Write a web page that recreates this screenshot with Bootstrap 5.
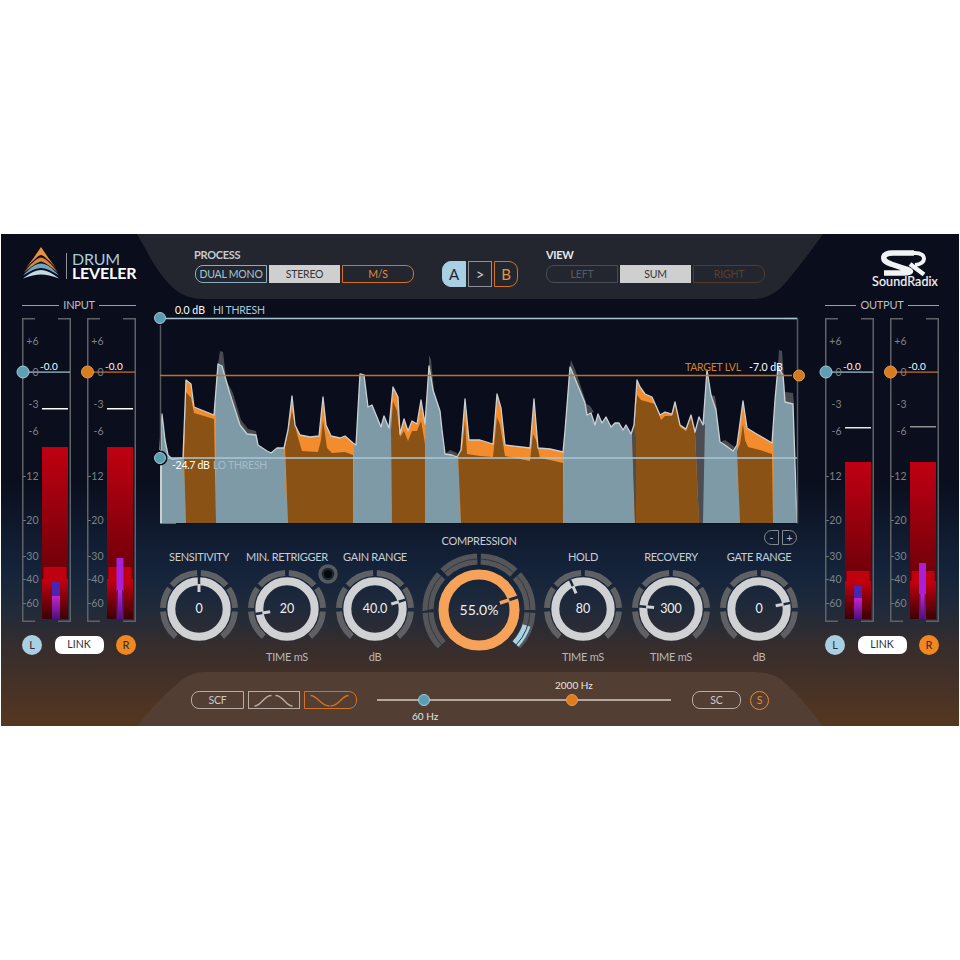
<!DOCTYPE html>
<html lang="en">
<head>
<meta charset="utf-8">
<title>Drum Leveler</title>
<link href="https://cdn.jsdelivr.net/npm/bootstrap@5.3.0/dist/css/bootstrap.min.css" rel="stylesheet">
<style>
html,body{background:#fff;}
body{font-family:"Lato","Liberation Sans",sans-serif;}
.plugin{width:958px;height:492px;margin:234px 0 0 1px;position:relative;overflow:hidden;color:#c9ccd0;
 background:linear-gradient(180deg,#0a0d1c 0%,#0a0e1d 50%,#14233a 68%,#1f2a3a 76%,#372d2d 84%,#483226 93%,#553720 100%);}
.plate{position:absolute;inset:0;width:958px;height:492px;}
.topbar{height:65px;position:relative;}
.brand{width:114px;margin-left:22px;height:65px;position:relative;}
.brand-mark{position:absolute;left:-1px;top:11px;}
.brand-name{position:absolute;left:49px;top:18px;font-weight:700;font-size:16px;line-height:14px;letter-spacing:-.2px;color:#fff;}
.brand-name span{display:block;}
.brand-name .nm1{color:#a6cbdd;font-weight:400;}
.brand-rule{position:absolute;left:43px;top:19px;height:26px;width:1px;background:#8d9198;}
.grp-title{font-size:11px;font-weight:700;letter-spacing:-.3px;line-height:12px;padding-top:15px;box-sizing:content-box;height:12px;margin-bottom:4px;margin-left:-1px;color:#c8cbd0;}
.title-view{color:#e6e8ea;margin-left:0;}
.proc{margin-left:58px;}
.view{margin-left:28px;}
.abgrp{margin-left:28px;margin-top:27px;gap:2px;}
.pbtn{--bs-btn-padding-x:0;--bs-btn-padding-y:0;--bs-btn-font-size:10.5px;--bs-btn-line-height:15px;--bs-btn-border-radius:0;
 height:18px;font-family:inherit;border-width:1.5px;letter-spacing:-.2px;display:flex;align-items:center;justify-content:center;}
.w72{width:72px;}.w69{width:71px;}
.gap-2px{gap:2px;}
.r-l{border-radius:8px 0 0 8px;}
.r-r{border-radius:0 8px 8px 0;}
.r-a{border-radius:8px;}
.b-blue{border-color:#8aafc2;color:#a8c6d5;}
.b-fill{background:#cfcfcf;border-color:#cfcfcf;color:#33363c;}
.b-org{border-color:#d5711f;color:#e28a3c;}
.b-dim1{border-color:#474d57;color:#565c66;}
.b-dim2{border-color:#54392d;color:#593f31;}
.b-lite{border-color:#b7aca6;color:#cfc8c3;}
.b-curve{width:52px;height:18px;border:1.5px solid #b7aca6;}
.b-dip{width:53px;height:18px;border:1.5px solid #d5711f;}
.w53{width:53px;}
.abtn{--bs-btn-padding-x:0;--bs-btn-padding-y:0;--bs-btn-font-size:15px;--bs-btn-border-radius:0;width:24px;height:26px;font-family:inherit;border-width:1.5px;display:flex;align-items:center;justify-content:center;}
.a-on{background:#a8d0e2;border-color:#a8d0e2;color:#1f2530;border-radius:9px 0 0 9px;}
.a-mid{border-color:#8d9096;color:#c9ccd0;}
.a-b{border-color:#d5711f;color:#e8933e;border-radius:0 9px 9px 0;}
.srlogo{position:absolute;left:868px;top:11px;width:72px;height:47px;}
.srlogo svg{overflow:visible;}
.srname{position:absolute;left:0;right:0;top:30px;text-align:center;font-size:12.5px;font-weight:400;line-height:14px;color:#f2f3f4;letter-spacing:.1px;-webkit-text-stroke:.2px #f2f3f4;}
.mainrow{height:372px;position:relative;}
.mcol{width:149px;padding-left:21px;}
.mcol-r{padding-left:15px;width:149px;}
.mtitle{width:114px;height:12px;font-size:11px;letter-spacing:-.25px;line-height:12px;color:#bcbfc3;gap:4px;margin-bottom:7px;}
.mtitle i{flex:1;height:1px;background:#9a9da2;}
.vupair{gap:16px;}
.vu{width:49px;height:304px;position:relative;}
.vu svg{position:absolute;left:0;top:0;overflow:visible;}
.sc{position:absolute;left:0;width:16.5px;text-align:right;font-size:10.5px;line-height:12px;color:#7f8287;}
.val{position:absolute;left:18px;top:42px;font-size:10px;line-height:12px;color:#fff;}
.lrrow{width:114px;margin-top:13px;height:19px;}
.dot{width:20px;height:20px;border-radius:50%;font-size:11px;line-height:1;display:flex;align-items:center;justify-content:center;color:#2b2f36;}
.dot-l{background:#a8d0e2;}
.dot-r{background:#f2861f;}
.linkbtn{width:49px;height:18px;border-radius:7px;background:#fff;color:#2e3138;font-size:10.5px;display:flex;align-items:center;justify-content:center;}
.ccol{width:660px;position:relative;}
.wavebox{width:660px;height:226px;margin-top:9px;position:relative;}
.wavebox svg{position:absolute;left:0;top:0;}
.wl{position:absolute;font-size:10.5px;line-height:12px;white-space:nowrap;}
.wcap{font-size:10.5px;letter-spacing:-.25px;}
.t1{left:25px;top:-4px;color:#fff;}
.t2{left:63px;top:-4px;color:#a8c8d8;}
.t3{left:22px;top:151px;color:#fff;letter-spacing:-.3px;}
.t4{left:63px;top:151px;color:#a5bcc8;}
.t5{left:535px;top:53px;color:#d3812f;}
.t6{left:599px;top:53px;color:#fff;}
.zoomrow{position:absolute;left:614px;top:222px;gap:3px;}
.zbtn{width:15px;height:15px;border:1px solid #85888d;color:#b9bcc0;font-size:11px;line-height:1;display:flex;align-items:center;justify-content:center;}
.knobs{padding-left:5px;height:132px;}
.knob{width:88px;padding-top:16px;position:relative;}
.knob-big{width:120px;padding-top:0;}
.klabel{font-size:11px;letter-spacing:-.3px;line-height:14px;height:14px;white-space:nowrap;color:#c9ccd0;text-align:center;}
.ksub{font-size:11px;letter-spacing:-.25px;line-height:14px;height:14px;color:#b6b8bb;text-align:center;margin-top:1px;}
.kwrap{position:relative;width:80px;height:80px;margin:5px auto 0;}
.kwrap-big{width:120px;height:116px;margin-top:4px;}
.kval{font-size:12.5px;color:#f0f1f2;line-height:1;}
.kval-big{font-size:14px;}
.retr{position:absolute;left:75px;top:30px;}
.botrow{height:55px;padding:20px 0 0 190px;position:relative;gap:4px;}
.slider{width:294px;height:18px;margin:0 17px 0 16px;position:relative;}
.track{position:absolute;left:0;right:0;top:8px;height:2px;background:#b3a79e;}
.knobdot{position:absolute;top:3px;width:12px;height:12px;border-radius:50%;margin-left:-6px;}
.kd1{left:47px;background:#5a9fb3;border:1px solid #a9cad6;}
.kd2{left:195px;background:#dd7d1e;border:1px solid #f09b45;}
.hz{position:absolute;font-size:10px;line-height:12px;color:#e8e3de;white-space:nowrap;}
.hz1{left:178px;top:-12px;}
.hz2{left:35px;top:19px;}
.sbtn{width:49px;}
.scirc{width:19px;height:19px;border-radius:50%;border:1.5px solid #ec8a2c;color:#ec8a2c;font-size:10.5px;line-height:1;margin-left:5px;display:flex;align-items:center;justify-content:center;}
</style>
</head>
<body>
<svg width="0" height="0" class="position-absolute">
<defs>
<linearGradient id="g1" x1="0" y1="0" x2="0" y2="1"><stop offset="0" stop-color="#c00012"/><stop offset="1" stop-color="#6a0009"/></linearGradient>
<linearGradient id="g2" x1="0" y1="0" x2="0" y2="1"><stop offset="0" stop-color="#c60010"/><stop offset="1" stop-color="#3a0005"/></linearGradient>
<linearGradient id="gm" x1="0" y1="0" x2="0" y2="1"><stop offset="0" stop-color="#c424cc"/><stop offset="1" stop-color="#4d0f80"/></linearGradient>
<symbol id="ring" viewBox="-40 -40 80 80">
<circle r="36" fill="none" stroke="#5e6064" stroke-width="6" pathLength="360" stroke-dasharray="0 3 46 6 33 6 46 80 46 6 33 6 46 3" transform="rotate(-90)"/>
<circle r="27.7" fill="none" stroke="#d0d1d3" stroke-width="8"/>
</symbol>
<clipPath id="envclip"><polygon points="160,523 160,450 162,414 165,440 168,455 172,459 183,458 186,380 191,384 194,407 214,415 218,364 222,366 230,394 240,425 247,434 256,435 258,445 267,451 271,453 277,448 284,448 288,430 292,396 295,425 300,435 310,437 319,436 323,397 326,425 331,436 340,438 345,436 353,443 356,445 360,374 364,375 368,407 372,405 381,427 384,416 389,428 393,387 398,397 400,434 404,419 408,431 412,421 417,424 421,400 425,424 429,366 433,390 440,411 442,430 445,454 452,455 457,457 461,450 465,399 469,440 480,440 493,444 497,394 501,408 505,445 530,448 534,399 538,448 550,449 563,452 565,431 570,367 574,376 585,403 587,415 591,413 595,425 598,414 602,423 606,417 611,427 615,423 619,423 623,430 626,425 631,434 634,425 637,380 640,387 645,394 652,397 660,415 665,412 672,414 675,402 680,425 686,429 691,415 695,432 699,417 703,425 707,370 711,395 716,410 720,442 725,445 733,451 737,445 743,401 747,428 755,433 772,443 775,400 778,367 783,375 785,402 793,404 797,523"/></clipPath>
</defs>
</svg>

<div class="plugin d-flex flex-column">
  <svg class="plate" viewBox="1 234 958 492" aria-hidden="true">
    <path d="M137 234C147 251 155 270 172 287C182 296 192 299 205 299H752C768 299 778 292 787 281C800 265 812 250 823 234Z" fill="#23262f"/>
    <path d="M137 726C150 710 165 694 177 684C186 676 194 672 205 672H752C766 672 775 675 783 681C796 692 810 709 823 726Z" fill="#533e34"/>
  </svg>

  <div class="topbar d-flex">
    <div class="brand">
      <svg class="brand-mark" width="38" height="34" viewBox="22 245 38 34" aria-hidden="true">
        <path d="M41 247C37 253 31 262 26 268C32 262 37 256 41 255C45 256 50 262 56 268C51 262 45 253 41 247Z" fill="#e8933c"/>
        <path d="M41 257.500C36 258 30 265 24 272.500C31 267 37 262 41 261.500C45 262 51 267 58 272.500C52 265 46 258 41 257.500Z" fill="#d98436"/>
        <path d="M41 263.500C35 263.500 29 269 23 275.500C30 271 36 268 41 268C46 268 52 271 59 275.500C53 269 47 263.500 41 263.500Z" fill="#6fa6c2"/>
        <path d="M41 270C35 270 29 274 23 278.500C30 276 36 274.500 41 274.500C46 274.500 52 276 59 278.500C53 274 47 270 41 270Z" fill="#c3dae5"/>
      </svg>
      <i class="brand-rule"></i>
      <div class="brand-name"><span class="nm1">DRUM</span><span>LEVELER</span></div>
    </div>
    <div class="proc">
      <div class="grp-title">PROCESS</div>
      <div class="d-flex gap-2px">
        <button class="btn pbtn w72 r-l b-blue">DUAL MONO</button>
        <button class="btn pbtn w69 b-fill">STEREO</button>
        <button class="btn pbtn w72 r-r b-org">M/S</button>
      </div>
    </div>
    <div class="abgrp d-flex">
      <button class="btn abtn a-on">A</button>
      <button class="btn abtn a-mid">&gt;</button>
      <button class="btn abtn a-b">B</button>
    </div>
    <div class="view">
      <div class="grp-title title-view">VIEW</div>
      <div class="d-flex gap-2px">
        <button class="btn pbtn w72 r-l b-dim1">LEFT</button>
        <button class="btn pbtn w69 b-fill">SUM</button>
        <button class="btn pbtn w72 r-r b-dim2">RIGHT</button>
      </div>
    </div>
    <div class="srlogo">
      <svg width="72" height="30" viewBox="868 246 72 30" class="position-absolute top-0 start-0" aria-hidden="true">
        <path d="M913 254H892C880 254 880 262 890 265L905 270C912 272 910 274 903 274H883" fill="none" stroke="#f2f3f4" stroke-width="5.500"/>
        <path d="M905 254H914C926 254 926 265 914 266" fill="none" stroke="#f2f3f4" stroke-width="4"/>
        <path d="M909 265L923 275.500" fill="none" stroke="#f2f3f4" stroke-width="4.500"/>
      </svg>
      <div class="srname">SoundRadix</div>
    </div>
  </div>

  <div class="mainrow d-flex">
    <div class="mcol">
      <div class="mtitle d-flex align-items-center"><i></i>INPUT<i></i></div>
      <div class="vupair d-flex">
        <div class="vu">
          <svg width="49" height="304" viewBox="0 0 49 304" aria-hidden="true">
            <path d="M13 .75H.75V303.250H13M36 .75H48.250V303.250H36" fill="none" stroke="#5f6267" stroke-width="1.500"/>
            <rect x="20" y="129" width="26" height="133" fill="url(#g1)"/>
            <rect x="20" y="261" width="26" height="40" fill="url(#g2)"/>
            <rect x="21.500" y="249" width="23" height="14" fill="#bf000f"/>
            <rect x="30" y="264" width="8" height="15" fill="#4a25b0"/>
            <rect x="30" y="278" width="8" height="23" fill="url(#gm)"/>
            <rect x="20" y="90" width="26" height="1.500" fill="#fff"/>
            <rect x="1" y="53.500" width="47" height="1.200" fill="#a9cad8"/>
            <circle cx="1" cy="54" r="6" fill="#5f9fb3" stroke="#a9cad8" stroke-width="1"/>
          </svg>
          <span class="sc" style="top:17px">+6</span><span class="sc" style="top:48px">0</span><span class="sc" style="top:80px">-3</span><span class="sc" style="top:107px">-6</span><span class="sc" style="top:152px">-12</span><span class="sc" style="top:196px">-20</span><span class="sc" style="top:232px">-30</span><span class="sc" style="top:255px">-40</span><span class="sc" style="top:279px">-60</span>
          <span class="val">-0.0</span>
        </div>
        <div class="vu">
          <svg width="49" height="304" viewBox="0 0 49 304" aria-hidden="true">
            <path d="M13 .75H.75V303.250H13M36 .75H48.250V303.250H36" fill="none" stroke="#5f6267" stroke-width="1.500"/>
            <rect x="20" y="129" width="26" height="133" fill="url(#g1)"/>
            <rect x="20" y="261" width="26" height="40" fill="url(#g2)"/>
            <rect x="21.500" y="249" width="23" height="14" fill="#bf000f"/>
            <rect x="29.500" y="240" width="7" height="34" fill="#a520d8"/>
            <rect x="29.500" y="272" width="7" height="29" fill="#5d1485"/>
            <rect x="31" y="272" width="4" height="29" fill="url(#gm)"/>
            <rect x="20" y="90" width="26" height="1.500" fill="#fff"/>
            <rect x="1" y="53.500" width="47" height="1.200" fill="#cf7521"/>
            <circle cx=".5" cy="54" r="6" fill="#d97c1f" stroke="#e59a50" stroke-width="1"/>
          </svg>
          <span class="sc" style="top:17px">+6</span><span class="sc" style="top:48px">0</span><span class="sc" style="top:80px">-3</span><span class="sc" style="top:107px">-6</span><span class="sc" style="top:152px">-12</span><span class="sc" style="top:196px">-20</span><span class="sc" style="top:232px">-30</span><span class="sc" style="top:255px">-40</span><span class="sc" style="top:279px">-60</span>
          <span class="val">-0.0</span>
        </div>
      </div>
      <div class="lrrow d-flex justify-content-between align-items-center">
        <div class="dot dot-l">L</div><div class="linkbtn">LINK</div><div class="dot dot-r">R</div>
      </div>
    </div>

    <div class="ccol">
      <div class="wavebox">
        <svg width="660" height="226" viewBox="150 308 660 226" aria-hidden="true">
          <rect x="160" y="318" width="638" height="205.500" fill="#0a0d1c"/>
          <g fill="#4a4b51">
            <polygon points="218,364 220,351 223,352 226,378 222,366"/>
            <polygon points="225,378 233,393 241,420 248,429 256,431 258,445 256,435 247,434 240,425 230,394"/>
            <polygon points="429,366 429,355 431,360 434,390 433,390"/>
            <polygon points="445,454 450,450 457,453 457,457 452,455"/>
            <polygon points="570,367 571,360 576,372 586,402 585,403 574,376"/>
            <polygon points="585,403 590,406 594,412 591,413 587,415"/>
            <polygon points="711,395 715,396 717,410 716,410"/>
            <polygon points="776,400 779,350 782,351 785,392 793,393 794,404 785,402 783,375 778,367"/>
            <polygon points="720,442 725,440 735,447 733,451 725,445"/>
          </g>
          <g clip-path="url(#envclip)">
            <rect x="160" y="320" width="640" height="204" fill="#f28c2c"/>
            <g fill="#7f9aa7">
              <polygon points="160,320 184,320 184,458 186,523 160,523"/>
              <polygon points="216,320 284,320 284,447 288,523 216,523"/>
              <polygon points="356,320 390,320 391,430 392,523 353,523"/>
              <polygon points="426,320 458,320 458,454 461,523 425,523"/>
              <polygon points="566,320 632,320 632,434 635,523 563,523"/>
              <polygon points="705,320 737,320 737,451 740,523 703,523"/>
              <polygon points="775,320 798,320 798,523 773,523"/>
            </g>
            <g fill="#8b5215">
              <polygon points="186,523 184,458 186,392 191,398 194,413 214,419 216,523"/>
              <polygon points="288,523 285,447 292,411 297,434 302,451 318,452 321,440 323,420 327,448 332,453 345,452 353,455 353,523"/>
              <polygon points="392,523 391,430 393,401 397,411 400,437 404,431 408,441 412,431 417,431 421,421 425,444 425,523"/>
              <polygon points="461,523 458,454 462,450 465,420 467,454 480,456 493,457 497,417 500,425 505,456 530,461 533,434 536,440 540,458 550,460 563,463 563,523"/>
              <polygon points="635,523 632,434 634,428 637,395 641,400 648,402 655,404 661,420 665,416 672,416 675,404 680,427 686,431 691,417 695,434 699,523"/>
              <polygon points="740,523 737,451 740,444 743,424 745,440 748,447 760,450 772,454 773,523"/>
            </g>
            <polygon points="695,432 699,417 703,425 705,424 703,523 699,523" fill="#4c4d52"/>
            <polygon points="632,434 634,425 636,440 636,523 635,523" fill="#4c4d52"/>
            <rect x="160" y="414" width="2" height="110" fill="#c9ced2"/>
          </g>
          <polyline points="160,450 162,414 165,440 168,455 172,459 183,458 186,380 191,384 194,407 214,415 218,364 222,366 230,394 240,425 247,434 256,435 258,445 267,451 271,453 277,448 284,448 288,430 292,396 295,425 300,435 310,437 319,436 323,397 326,425 331,436 340,438 345,436 353,443 356,445 360,374 364,375 368,407 372,405 381,427 384,416 389,428 393,387 398,397 400,434 404,419 408,431 412,421 417,424 421,400 425,424 429,366 433,390 440,411 442,430 445,454 452,455 457,457 461,450 465,399 469,440 480,440 493,444 497,394 501,408 505,445 530,448 534,399 538,448 550,449 563,452 565,431 570,367 574,376 585,403 587,415 591,413 595,425 598,414 602,423 606,417 611,427 615,423 619,423 623,430 626,425 631,434 634,425 637,380 640,387 645,394 652,397 660,415 665,412 672,414 675,402 680,425 686,429 691,415 695,432 699,417 703,425 707,370 711,395 716,410 720,442 725,445 733,451 737,445 743,401 747,428 755,433 772,443 775,400 778,367 783,375 785,402 793,404 797,523" fill="none" stroke="#c9d0d4" stroke-width="1.300" stroke-linejoin="round"/>
          <rect x="160" y="523" width="16" height="1" fill="#6b7075"/>
          <path d="M160.500 325V450" stroke="#55575e" stroke-width="1.500"/>
          <path d="M784 318.500H797.500V523.500" fill="none" stroke="#56585f" stroke-width="1.500"/>
          <path d="M166 318.500H797" stroke="#a9c6d3" stroke-width="1.300"/>
          <path d="M166 458H797" stroke="#a9c8d6" stroke-width="1.300"/>
          <path d="M160 375.500H792" stroke="#c9701f" stroke-width="1.300"/>
          <circle cx="160" cy="318" r="5.500" fill="#5b9db0" stroke="#a9c6d3"/>
          <circle cx="160" cy="458" r="7.500" fill="#0a0d1c"/>
          <circle cx="160" cy="458" r="5.500" fill="#5b9db0" stroke="#a9c6d3"/>
          <circle cx="799" cy="375.500" r="5.500" fill="#d27a1f" stroke="#e59a50"/>
        </svg>
        <span class="wl t1">0.0 dB</span><span class="wl wcap t2">HI THRESH</span>
        <span class="wl t3">-24.7 dB</span><span class="wl wcap t4">LO THRESH</span>
        <span class="wl wcap t5">TARGET LVL</span><span class="wl t6">-7.0 dB</span>
        <div class="zoomrow d-flex">
          <div class="zbtn r-l">-</div><div class="zbtn r-r">+</div>
        </div>
      </div>

      <div class="knobs d-flex align-items-start">
        <div class="knob">
          <div class="klabel">SENSITIVITY</div>
          <div class="kwrap">
            <svg width="80" height="80" viewBox="-40 -40 80 80" aria-hidden="true"><use href="#ring" x="-40" y="-40" width="80" height="80"/><g transform="rotate(0)"><line y1="-32" y2="-24" stroke="#1e2a3a" stroke-width="2.500"/><line y1="-25" y2="-17" stroke="#d0d1d3" stroke-width="3"/></g></svg>
            <span class="kval position-absolute top-50 start-50 translate-middle">0</span>
          </div>
          <div class="ksub">&nbsp;</div>
        </div>
        <div class="knob">
          <div class="klabel">MIN. RETRIGGER</div>
          <div class="kwrap">
            <svg width="80" height="80" viewBox="-40 -40 80 80" aria-hidden="true"><use href="#ring" x="-40" y="-40" width="80" height="80"/><g transform="rotate(-99)"><line y1="-32" y2="-24" stroke="#1e2a3a" stroke-width="2.500"/><line y1="-25" y2="-17" stroke="#d0d1d3" stroke-width="3"/></g></svg>
            <span class="kval position-absolute top-50 start-50 translate-middle">20</span>
          </div>
          <div class="ksub">TIME mS</div>
          <svg class="retr" width="20" height="20" viewBox="-10 -10 20 20" aria-hidden="true"><circle r="8" fill="#1b2636" stroke="#56595e" stroke-width="3.500"/><circle r="4" fill="#07080c"/></svg>
        </div>
        <div class="knob">
          <div class="klabel">GAIN RANGE</div>
          <div class="kwrap">
            <svg width="80" height="80" viewBox="-40 -40 80 80" aria-hidden="true"><use href="#ring" x="-40" y="-40" width="80" height="80"/><g transform="rotate(73)"><line y1="-32" y2="-24" stroke="#1e2a3a" stroke-width="2.500"/><line y1="-25" y2="-17" stroke="#d0d1d3" stroke-width="3"/></g></svg>
            <span class="kval position-absolute top-50 start-50 translate-middle">40.0</span>
          </div>
          <div class="ksub">dB</div>
        </div>
        <div class="knob knob-big">
          <div class="klabel">COMPRESSION</div>
          <div class="kwrap kwrap-big">
            <svg width="120" height="116" viewBox="-60 -58 120 116" aria-hidden="true">
              <circle r="51" fill="none" stroke="#55565a" stroke-width="11" pathLength="360" stroke-dasharray="0 2 41 5 42 3 40 94 40 3 42 5 41 2" transform="rotate(-90)"/>
              <circle r="50" fill="none" stroke="#a8d3e6" stroke-width="8" pathLength="360" stroke-dasharray="25 335" transform="rotate(18)"/>
              <circle r="51" fill="none" stroke="#34363b" stroke-width="1" pathLength="360" stroke-dasharray="0 2 41 5 42 3 40 94 40 3 42 5 41 2" transform="rotate(-90)"/>
              <circle r="35.500" fill="none" stroke="#f6a258" stroke-width="10"/>
              <g transform="rotate(71.500)"><line y1="-43" y2="-31" stroke="#1b2a3c" stroke-width="3"/><line y1="-32" y2="-22" stroke="#f6a258" stroke-width="3.500"/></g>
            </svg>
            <span class="kval kval-big position-absolute top-50 start-50 translate-middle">55.0%</span>
          </div>
        </div>
        <div class="knob">
          <div class="klabel">HOLD</div>
          <div class="kwrap">
            <svg width="80" height="80" viewBox="-40 -40 80 80" aria-hidden="true"><use href="#ring" x="-40" y="-40" width="80" height="80"/><g transform="rotate(-24)"><line y1="-32" y2="-24" stroke="#1e2a3a" stroke-width="2.500"/><line y1="-25" y2="-17" stroke="#d0d1d3" stroke-width="3"/></g></svg>
            <span class="kval position-absolute top-50 start-50 translate-middle">80</span>
          </div>
          <div class="ksub">TIME mS</div>
        </div>
        <div class="knob">
          <div class="klabel">RECOVERY</div>
          <div class="kwrap">
            <svg width="80" height="80" viewBox="-40 -40 80 80" aria-hidden="true"><use href="#ring" x="-40" y="-40" width="80" height="80"/><g transform="rotate(-85)"><line y1="-32" y2="-24" stroke="#1e2a3a" stroke-width="2.500"/><line y1="-25" y2="-17" stroke="#d0d1d3" stroke-width="3"/></g></svg>
            <span class="kval position-absolute top-50 start-50 translate-middle">300</span>
          </div>
          <div class="ksub">TIME mS</div>
        </div>
        <div class="knob">
          <div class="klabel">GATE RANGE</div>
          <div class="kwrap">
            <svg width="80" height="80" viewBox="-40 -40 80 80" aria-hidden="true"><use href="#ring" x="-40" y="-40" width="80" height="80"/><g transform="rotate(79)"><line y1="-32" y2="-24" stroke="#1e2a3a" stroke-width="2.500"/><line y1="-25" y2="-17" stroke="#d0d1d3" stroke-width="3"/></g></svg>
            <span class="kval position-absolute top-50 start-50 translate-middle">0</span>
          </div>
          <div class="ksub">dB</div>
        </div>
      </div>
    </div>

    <div class="mcol-r">
      <div class="mtitle d-flex align-items-center"><i></i>OUTPUT<i></i></div>
      <div class="vupair d-flex">
        <div class="vu">
          <svg width="49" height="304" viewBox="0 0 49 304" aria-hidden="true">
            <path d="M13 .75H.75V303.250H13M36 .75H48.250V303.250H36" fill="none" stroke="#5f6267" stroke-width="1.500"/>
            <rect x="20" y="144" width="26" height="121" fill="url(#g1)"/>
            <rect x="20" y="263" width="26" height="38" fill="url(#g2)"/>
            <rect x="21.500" y="253" width="23" height="12" fill="#bf000f"/>
            <rect x="29" y="268" width="8" height="13" fill="#4a25b0"/>
            <rect x="29" y="280" width="8" height="21" fill="url(#gm)"/>
            <rect x="20" y="109" width="26" height="1.500" fill="#e6e7e8"/>
            <rect x="1" y="53.500" width="47" height="1.200" fill="#a9cad8"/>
            <circle cx="1" cy="54" r="6" fill="#5f9fb3" stroke="#a9cad8" stroke-width="1"/>
          </svg>
          <span class="sc" style="top:17px">+6</span><span class="sc" style="top:48px">0</span><span class="sc" style="top:80px">-3</span><span class="sc" style="top:107px">-6</span><span class="sc" style="top:152px">-12</span><span class="sc" style="top:196px">-20</span><span class="sc" style="top:232px">-30</span><span class="sc" style="top:255px">-40</span><span class="sc" style="top:279px">-60</span>
          <span class="val">-0.0</span>
        </div>
        <div class="vu">
          <svg width="49" height="304" viewBox="0 0 49 304" aria-hidden="true">
            <path d="M13 .75H.75V303.250H13M36 .75H48.250V303.250H36" fill="none" stroke="#5f6267" stroke-width="1.500"/>
            <rect x="20" y="144" width="26" height="121" fill="url(#g1)"/>
            <rect x="20" y="263" width="26" height="38" fill="url(#g2)"/>
            <rect x="21.500" y="253" width="23" height="12" fill="#bf000f"/>
            <rect x="29" y="245" width="7" height="32" fill="#a520d8"/>
            <rect x="29" y="276" width="7" height="25" fill="#5d1485"/>
            <rect x="30.500" y="276" width="4" height="25" fill="url(#gm)"/>
            <rect x="20" y="108" width="26" height="1.500" fill="#8e9094"/>
            <rect x="1" y="53.500" width="47" height="1.200" fill="#cf7521"/>
            <circle cx=".5" cy="54" r="6" fill="#d97c1f" stroke="#e59a50" stroke-width="1"/>
          </svg>
          <span class="sc" style="top:17px">+6</span><span class="sc" style="top:48px">0</span><span class="sc" style="top:80px">-3</span><span class="sc" style="top:107px">-6</span><span class="sc" style="top:152px">-12</span><span class="sc" style="top:196px">-20</span><span class="sc" style="top:232px">-30</span><span class="sc" style="top:255px">-40</span><span class="sc" style="top:279px">-60</span>
          <span class="val">-0.0</span>
        </div>
      </div>
      <div class="lrrow d-flex justify-content-between align-items-center">
        <div class="dot dot-l">L</div><div class="linkbtn">LINK</div><div class="dot dot-r">R</div>
      </div>
    </div>
  </div>

  <div class="botrow d-flex">
    <button class="btn pbtn w53 r-l b-lite">SCF</button>
    <div class="b-curve d-flex align-items-center" aria-hidden="true">
      <svg width="49" height="15" viewBox="1.500 1.500 49 15"><path d="M7 14.500C14 14.500 16 4 24 4M28 4C36 4 38 14.500 45 14.500" fill="none" stroke="#b7aca6" stroke-width="1.400"/></svg>
    </div>
    <div class="b-dip r-r d-flex align-items-center" aria-hidden="true">
      <svg width="50" height="15" viewBox="1.500 1.500 50 15"><path d="M7 4C14 4 17 14.500 26 14.500M27 14.500C36 14.500 38 4 45 4" fill="none" stroke="#d5711f" stroke-width="1.400"/></svg>
    </div>
    <div class="slider">
      <div class="track"></div>
      <i class="knobdot kd1"></i><i class="knobdot kd2"></i>
      <span class="hz hz1">2000 Hz</span><span class="hz hz2">60 Hz</span>
    </div>
    <button class="btn pbtn sbtn r-a b-lite">SC</button>
    <div class="scirc">S</div>
  </div>
</div>
<script src="https://cdn.jsdelivr.net/npm/bootstrap@5.3.0/dist/js/bootstrap.bundle.min.js"></script>
</body>
</html>
